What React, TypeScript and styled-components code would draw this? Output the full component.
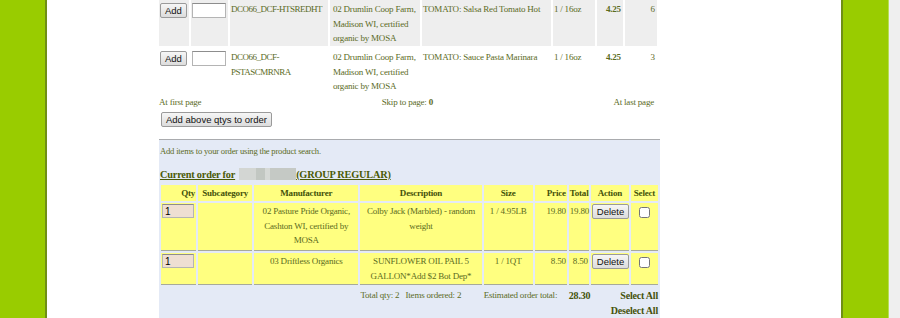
import React from "react";
import styled, { createGlobalStyle } from "styled-components";

const GlobalStyle = createGlobalStyle`
  html, body {
    margin: 0;
    padding: 0;
    background: #ffffff;
  }
  body {
    font-family: "Liberation Serif", "DejaVu Serif", serif;
    font-size: 9px;
    letter-spacing: -0.2px;
    color: #5b6b1e;
  }
`;

const Page = styled.div`
  display: flex;
  width: 900px;
  height: 318px;
  overflow: hidden;
`;

const SideBar = styled.div<{ $side: "left" | "right" }>`
  flex: none;
  width: 45px;
  background: #99cc00;
  ${(p) =>
    p.$side === "left"
      ? "border-right: 2px solid #6f8f16;"
      : "border-left: 2px solid #6f8f16; border-right: 1px solid #b6dd55;"}
`;

const Gutter = styled.div`
  flex: none;
  width: 11px;
  background: #efefef;
`;

const Main = styled.div`
  flex: 1;
  padding-left: 112px;
  background: #ffffff;
`;

const Content = styled.div`
  width: 501px;
`;

const ProductTable = styled.table`
  border-spacing: 2px;
  margin: -2px 0 0 -2px;
  table-layout: fixed;
`;

const ProductRow = styled.tr<{ $shaded?: boolean }>`
  td {
    background: ${(p) => (p.$shaded ? "#eeeeee" : "transparent")};
  }
`;

const Cell = styled.td<{ $w: number; $align?: string; $bold?: boolean; $tight?: boolean }>`
  width: ${(p) => p.$w}px;
  padding: 2px 2px 0 1px;
  vertical-align: top;
  text-align: ${(p) => p.$align || "left"};
  font-weight: ${(p) => (p.$bold ? "bold" : "normal")};
  letter-spacing: ${(p) => (p.$tight ? "-0.5px" : "-0.2px")};
  line-height: 14.5px;
  height: 43px;
`;

const SmallButton = styled.button`
  font-family: "Liberation Sans", Arial, sans-serif;
  font-size: 9.5px;
  letter-spacing: 0;
  line-height: 11px;
  color: #111;
  padding: 1px 4px;
  border: 1px solid #9a9a9a;
  border-radius: 2px;
  background: linear-gradient(#f6f6f6, #dcdcdc);
  margin: 0;
`;

const QtyBox = styled.input<{ $filled?: boolean }>`
  box-sizing: border-box;
  width: 34px;
  height: 15px;
  margin: 0;
  padding: 0 2px;
  font-family: "Liberation Sans", Arial, sans-serif;
  font-size: 10px;
  border: 1px solid #b4b4b4;
  border-top-color: #8d8d8d;
  background: ${(p) => (p.$filled ? "#eedfd2" : "#ffffff")};
`;

const Pager = styled.div`
  display: flex;
  justify-content: space-between;
  width: 495px;
  line-height: 13px;
`;

const BulkRow = styled.div`
  padding: 3px 0 0 2px;
  height: 27px;
`;

const OrderBox = styled.div`
  border-top: 1px solid #a9abae;
  background: #e4eaf6;
  height: 180px;
`;

const Hint = styled.p`
  margin: 0;
  padding: 5px 0 0 1px;
  font-size: 8.6px;
  line-height: 12px;
`;

const OrderTitle = styled.h3`
  margin: 0 0 2px;
  padding: 11px 0 0 1px;
  font-size: 10.3px;
  line-height: 13px;
  font-weight: bold;
  color: #4a5a05;
  text-decoration: underline;
`;

const Redacted = styled.span`
  display: inline-block;
  width: 57px;
  height: 12px;
  vertical-align: -2px;
  margin-left: 4px;
  background: linear-gradient(
    90deg,
    #d3d6d3 0 30%,
    #c2c7c2 30% 45%,
    #d6d9d6 45% 55%,
    #c5c9c5 55% 100%
  );
`;

const OrderTable = styled.table`
  border-spacing: 2px;
  table-layout: fixed;
  width: 501px;
`;

const HeadCell = styled.th<{ $w: number; $align?: string }>`
  width: ${(p) => p.$w}px;
  background: #ffff80;
  color: #44520a;
  font-weight: bold;
  padding: 0 1px;
  height: 16px;
  line-height: 16px;
  white-space: nowrap;
  text-align: ${(p) => p.$align || "center"};
`;

const OrderCell = styled.td<{ $align?: string }>`
  background: #ffff80;
  border-bottom: 1px solid #a7aa9a;
  padding: 1px;
  vertical-align: top;
  line-height: 14.5px;
  text-align: ${(p) => p.$align || "center"};
`;

const FootCell = styled.td<{ $align?: string; $bold?: boolean }>`
  padding: 1px 0 0;
  vertical-align: top;
  line-height: 15px;
  white-space: nowrap;
  text-align: ${(p) => p.$align || "left"};
  font-weight: ${(p) => (p.$bold ? "bold" : "normal")};
  font-size: ${(p) => (p.$bold ? "10px" : "9px")};
  color: ${(p) => (p.$bold ? "#44520a" : "#5b6b1e")};
`;

const Check = styled.input`
  margin: 3px 0 0;
  width: 11px;
  height: 11px;
`;

const ItemRow = styled.tr<{ $tall: boolean }>`
  height: ${(p) => (p.$tall ? 48 : 28)}px;
`;

const products = [
  {
    code: "DCO66_DCF-HTSREDHT",
    maker: "02 Drumlin Coop Farm, Madison WI, certified organic by MOSA",
    desc: "TOMATO: Salsa Red Tomato Hot",
    size: "1 / 16oz",
    price: "4.25",
    stock: 6,
  },
  {
    code: "DCO66_DCF-PSTASCMRNRA",
    maker: "02 Drumlin Coop Farm, Madison WI, certified organic by MOSA",
    desc: "TOMATO: Sauce Pasta Marinara",
    size: "1 / 16oz",
    price: "4.25",
    stock: 3,
  },
];

const orderItems = [
  {
    maker: "02 Pasture Pride Organic, Cashton WI, certified by MOSA",
    desc: "Colby Jack (Marbled) - random weight",
    size: "1 / 4.95LB",
    price: "19.80",
    total: "19.80",
    tall: true,
  },
  {
    maker: "03 Driftless Organics",
    desc: "SUNFLOWER OIL PAIL 5 GALLON*Add $2 Bot Dep*",
    size: "1 / 1QT",
    price: "8.50",
    total: "8.50",
    tall: false,
  },
];

export default function App() {
  return (
    <>
      <GlobalStyle />
      <Page>
        <SideBar $side="left" />
        <Main>
          <Content>
            <ProductTable>
              <tbody>
                {products.map((p, i) => (
                  <ProductRow key={p.code} $shaded={i === 0}>
                    <Cell $w={26} style={{ paddingTop: 3 }}>
                      <SmallButton>Add</SmallButton>
                    </Cell>
                    <Cell $w={32} style={{ paddingTop: 3 }}>
                      <QtyBox />
                    </Cell>
                    <Cell $w={95} $tight>
                      {p.code}
                    </Cell>
                    <Cell $w={85} style={{ paddingLeft: 3 }}>
                      {p.maker}
                    </Cell>
                    <Cell $w={126}>{p.desc}</Cell>
                    <Cell $w={39}>{p.size}</Cell>
                    <Cell $w={23} $align="right" $bold>
                      {p.price}
                    </Cell>
                    <Cell $w={29} $align="right">
                      {p.stock}
                    </Cell>
                  </ProductRow>
                ))}
              </tbody>
            </ProductTable>

            <Pager>
              <span>At first page</span>
              <span>
                Skip to page: <b>0</b>
              </span>
              <span>At last page</span>
            </Pager>

            <BulkRow>
              <SmallButton>Add above qtys to order</SmallButton>
            </BulkRow>

            <OrderBox>
              <Hint>Add items to your order using the product search.</Hint>
              <OrderTitle>
                Current order for
                <Redacted />
                (GROUP REGULAR)
              </OrderTitle>
              <OrderTable>
                <thead>
                  <tr>
                    <HeadCell $w={33} $align="right">Qty</HeadCell>
                    <HeadCell $w={52}>Subcategory</HeadCell>
                    <HeadCell $w={102}>Manufacturer</HeadCell>
                    <HeadCell $w={119}>Description</HeadCell>
                    <HeadCell $w={47}>Size</HeadCell>
                    <HeadCell $w={30} $align="right">Price</HeadCell>
                    <HeadCell $w={18} $align="right">Total</HeadCell>
                    <HeadCell $w={36}>Action</HeadCell>
                    <HeadCell $w={25}>Select</HeadCell>
                  </tr>
                </thead>
                <tbody>
                  {orderItems.map((o) => (
                    <ItemRow key={o.desc} $tall={o.tall}>
                      <OrderCell $align="left">
                        <QtyBox $filled defaultValue="1" style={{ width: 32, height: 14 }} />
                      </OrderCell>
                      <OrderCell />
                      <OrderCell>{o.maker}</OrderCell>
                      <OrderCell>{o.desc}</OrderCell>
                      <OrderCell>{o.size}</OrderCell>
                      <OrderCell $align="right">{o.price}</OrderCell>
                      <OrderCell $align="right">{o.total}</OrderCell>
                      <OrderCell>
                        <SmallButton>Delete</SmallButton>
                      </OrderCell>
                      <OrderCell>
                        <Check type="checkbox" />
                      </OrderCell>
                    </ItemRow>
                  ))}
                  <tr>
                    <FootCell colSpan={3} />
                    <FootCell>Total qty: 2&nbsp;&nbsp; Items ordered: 2</FootCell>
                    <FootCell colSpan={2}>Estimated order total:</FootCell>
                    <FootCell $bold>28.30</FootCell>
                    <FootCell colSpan={2} $align="right" $bold>
                      Select All
                      <br />
                      Deselect All
                    </FootCell>
                  </tr>
                </tbody>
              </OrderTable>
            </OrderBox>
          </Content>
        </Main>
        <SideBar $side="right" />
        <Gutter />
      </Page>
    </>
  );
}
